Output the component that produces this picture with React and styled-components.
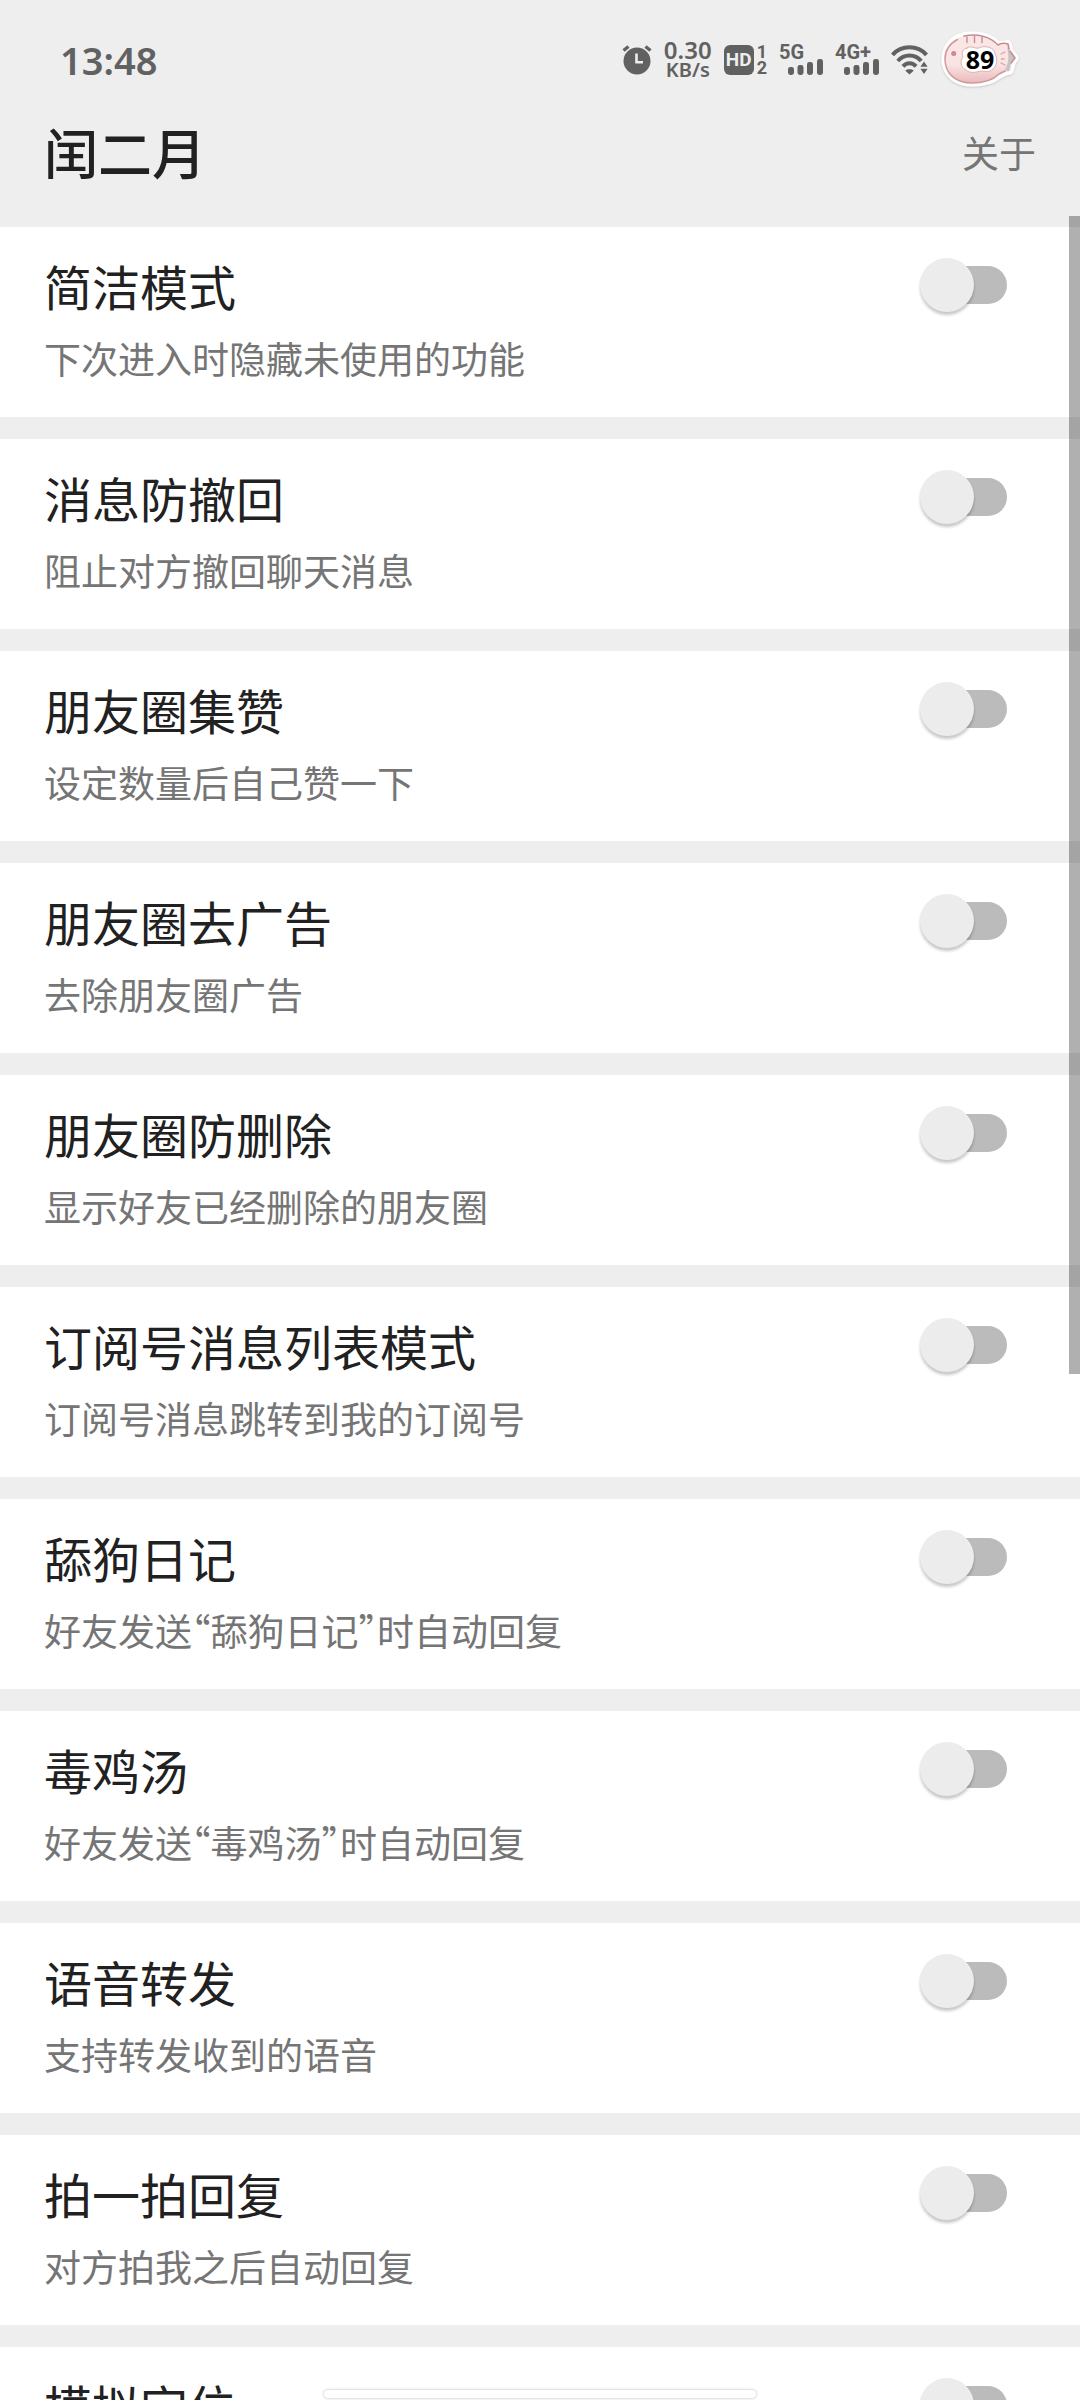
import { useState } from "react";
import styled, { createGlobalStyle } from "styled-components";

const FEATURES = [
  { id: "simple", title: "简洁模式", desc: "下次进入时隐藏未使用的功能" },
  { id: "revoke", title: "消息防撤回", desc: "阻止对方撤回聊天消息" },
  { id: "likes", title: "朋友圈集赞", desc: "设定数量后自己赞一下" },
  { id: "ads", title: "朋友圈去广告", desc: "去除朋友圈广告" },
  { id: "keep", title: "朋友圈防删除", desc: "显示好友已经删除的朋友圈" },
  { id: "subs", title: "订阅号消息列表模式", desc: "订阅号消息跳转到我的订阅号" },
  { id: "diary", title: "舔狗日记", desc: "好友发送“舔狗日记”时自动回复" },
  { id: "soup", title: "毒鸡汤", desc: "好友发送“毒鸡汤”时自动回复" },
  { id: "voice", title: "语音转发", desc: "支持转发收到的语音" },
  { id: "pat", title: "拍一拍回复", desc: "对方拍我之后自动回复" },
  { id: "location", title: "模拟定位" },
];

const AlarmIcon = () => (
  <svg width="30" height="30" viewBox="0 0 30 30" fill="#616161">
    <circle cx="15" cy="16" r="13.5" />
    <path d="M1.5 5.5 L6.5 1.5 M28.5 5.5 L23.5 1.5" stroke="#616161" strokeWidth="3.4" />
    <path d="M14.5 8.5 V17.3 H21" fill="none" stroke="#eeeeee" strokeWidth="2.6" />
  </svg>
);

const SignalBars = () => (
  <svg width="35" height="16" viewBox="0 0 35 16" fill="#616161">
    <rect x="0" y="8" width="6" height="8" rx="2.4" />
    <rect x="9.5" y="6" width="6" height="10" rx="2.4" />
    <rect x="19" y="3" width="6" height="13" rx="2.4" />
    <rect x="29" y="0" width="6" height="16" rx="2.4" />
  </svg>
);

const WifiIcon = () => (
  <svg width="37" height="30" viewBox="0 0 37 30" fill="none" stroke="#616161" strokeWidth="4">
    <path d="M1.5 9.8 C10.5 -0.2 26.5 -0.2 35.5 9.8" />
    <path d="M6.8 16 C13 8.8 24 8.8 30.2 16" />
    <path d="M12 21.4 C15.5 17.2 21.5 17.2 25 21.4" />
    <path d="M14.2 25.4 C16.5 23.8 20.5 23.8 22.8 25.4 L18.5 29.6 Z" fill="#616161" stroke="none" />
    <path d="M33 16.5 L36.6 21.8 H29.4 Z M29.4 23.8 H36.6 L33 29 Z" fill="#616161" stroke="none" />
  </svg>
);

const FishIcon = () => (
  <svg width="80" height="60" viewBox="0 0 80 60">
    <defs>
      <linearGradient id="fishBody" x1="0" y1="0" x2="0" y2="1">
        <stop offset="0" stopColor="#fbe6e6" />
        <stop offset="0.62" stopColor="#fae3e3" />
        <stop offset="1" stopColor="#e9b9b9" />
      </linearGradient>
      <filter id="fishShadow" x="-10%" y="-10%" width="120%" height="130%">
        <feDropShadow dx="0" dy="1" stdDeviation="1" floodColor="#000" floodOpacity="0.18" />
      </filter>
    </defs>
    <g strokeLinejoin="round" strokeLinecap="round">
      <path
        d="M31 5 C42 5 52 8 58 15 L68 13.5 L70 21 L75 28 L72 33 L70 41 L65 42 L59 45 C52 51 43 53 32 53 C16 53 5 44 5 29 C5 15 16 5 31 5 Z"
        fill="#fff"
        stroke="#fff"
        strokeWidth="7"
        filter="url(#fishShadow)"
      />
      <path
        d="M31 5 C42 5 52 8 58 15 L68 13.5 L70 21 L75 28 L72 33 L70 41 L65 42 L59 45 C52 51 43 53 32 53 C16 53 5 44 5 29 C5 15 16 5 31 5 Z"
        fill="url(#fishBody)"
      />
      <path d="M67 17 L70 22 L75 28 L71 33 L69 41 L65 40 C69 33 69 25 67 17 Z" fill="#c9c4c4" />
      <path
        d="M17.5 9.5 C9 14 5 20.5 5 29 C5 44 16 53 32 53 C43 53 52 51 59 44 L65 41"
        fill="none"
        stroke="#d09a9d"
        strokeWidth="1.5"
      />
      <path
        d="M24 6 C37 3.5 50 6 58 15 C61 13 65 13 68 14 L69 19 M70 21 L75 28 L71 33"
        fill="none"
        stroke="#c58e94"
        strokeWidth="1.6"
      />
      <path d="M27 7 V12.5 M34.5 6 V12.5 M42 7 V12.5" stroke="#c58e94" strokeWidth="1.4" />
      <path d="M61 24 L65 22 M61.5 29 H64 M61 33 L65 35" stroke="#d7a3a6" strokeWidth="1.3" />
      <path
        d="M27 18 C31 15 35 19 39 18 C44 15 55 17 55 24 C58 29 57 36 53 39 C49 43 44 41 40 41 C35 43 29 43 26 40 C20 37 20 31 23 27 C21 22 23 19 27 18 Z"
        fill="#fff"
        stroke="#dcb0b2"
        strokeWidth="1"
      />
      <circle cx="13.7" cy="23.5" r="2.5" fill="#c98a90" />
    </g>
  </svg>
);

const App = () => {
  const [enabled, setEnabled] = useState({});

  const toggle = (id) => {
    setEnabled((prev) => ({ ...prev, [id]: !prev[id] }));
  };

  return (
    <Screen lang="zh-CN">
      <GlobalStyle />
      <StatusBar>
        <Clock>13:48</Clock>
        <StatusIcons>
          <AlarmIcon />
          <Speed>
            <SpeedValue>0.30</SpeedValue>
            <SpeedUnit>KB/s</SpeedUnit>
          </Speed>
          <Volte>
            <HdBadge>HD</HdBadge>
            <SimNumbers>
              <span>1</span>
              <span>2</span>
            </SimNumbers>
          </Volte>
          <Network>
            <NetworkType>5G</NetworkType>
            <SignalBars />
          </Network>
          <Network>
            <NetworkType>4G+</NetworkType>
            <SignalBars />
          </Network>
          <WifiIcon />
          <Battery>
            <FishIcon />
            <BatteryLevel>89</BatteryLevel>
          </Battery>
        </StatusIcons>
      </StatusBar>
      <Header>
        <AppTitle>闰二月</AppTitle>
        <AboutLink href="#about">关于</AboutLink>
      </Header>
      <Content>
        <FeatureList>
          {FEATURES.map(({ id, title, desc }) => (
            <FeatureRow key={id}>
              <FeatureLabel htmlFor={id}>
                <FeatureTitle>{title}</FeatureTitle>
                {desc && <FeatureDesc>{desc}</FeatureDesc>}
              </FeatureLabel>
              <Switch
                id={id}
                type="checkbox"
                role="switch"
                checked={!!enabled[id]}
                onChange={() => toggle(id)}
              />
            </FeatureRow>
          ))}
        </FeatureList>
        <ScrollThumb />
      </Content>
      <HomeIndicator />
    </Screen>
  );
};

const GlobalStyle = createGlobalStyle`
  * {
    box-sizing: border-box;
  }
  body {
    margin: 0;
    background: #eeeeee;
    font-family: "Noto Sans CJK SC", sans-serif;
  }
`;

const Screen = styled.div`
  position: relative;
  display: flex;
  flex-direction: column;
  height: 100vh;
  overflow: hidden;
  background: #eeeeee;
  color: #212121;
`;

const StatusBar = styled.div`
  display: flex;
  justify-content: space-between;
  align-items: center;
  height: 120px;
  padding: 0 60px;
  color: #616161;
  font-family: "Noto Sans", sans-serif;
  font-weight: 600;
`;

const Clock = styled.time`
  font-size: 38px;
  line-height: 48px;
`;

const StatusIcons = styled.div`
  display: flex;
  align-items: center;
  gap: 12px;
`;

const Speed = styled.div`
  display: flex;
  flex-direction: column;
  align-items: center;
`;

const SpeedValue = styled.span`
  font-size: 24px;
  line-height: 20px;
`;

const SpeedUnit = styled.span`
  font-size: 20px;
  line-height: 20px;
`;

const Volte = styled.div`
  display: flex;
  gap: 3px;
  font-family: Roboto, sans-serif;
  font-weight: 700;
`;

const HdBadge = styled.span`
  width: 30px;
  height: 30px;
  border-radius: 6px;
  background: #616161;
  color: #eeeeee;
  font-size: 19px;
  line-height: 30px;
  text-align: center;
`;

const SimNumbers = styled.span`
  display: flex;
  flex-direction: column;
  justify-content: space-between;
  font-size: 18px;
  line-height: 14px;
`;

const Network = styled.div`
  display: flex;
  flex-direction: column;
  align-items: flex-end;
  width: 44px;
`;

const NetworkType = styled.span`
  align-self: flex-start;
  font-family: Roboto, sans-serif;
  font-size: 20px;
  font-weight: 700;
  line-height: 14px;
`;

const Battery = styled.div`
  position: relative;
  display: flex;
`;

const BatteryLevel = styled.span`
  position: absolute;
  inset: 0;
  color: #000000;
  font-size: 25px;
  font-weight: 700;
  line-height: 58px;
  text-align: center;
`;

const Header = styled.header`
  display: flex;
  justify-content: space-between;
  align-items: center;
  padding: 0 44px 32px;
`;

const AppTitle = styled.h1`
  margin: 0;
  font-size: 54px;
  font-weight: 500;
  line-height: 64px;
`;

const AboutLink = styled.a`
  color: #757575;
  font-size: 37px;
  line-height: 54px;
  text-decoration: none;
`;

const Content = styled.main`
  position: relative;
  flex: 1;
  min-height: 0;
`;

const FeatureList = styled.ul`
  display: flex;
  flex-direction: column;
  gap: 22px;
  height: 100%;
  margin: 0;
  padding: 11px 0 0;
  overflow-y: auto;
  scrollbar-width: none;
  list-style: none;
`;

const FeatureRow = styled.li`
  display: flex;
  flex-shrink: 0;
  justify-content: space-between;
  align-items: flex-start;
  padding: 31px 73px 32px 44px;
  background: #ffffff;
`;

const FeatureLabel = styled.label`
  display: flex;
  flex: 1;
  flex-direction: column;
  gap: 19px;
`;

const FeatureTitle = styled.span`
  font-size: 48px;
  line-height: 54px;
`;

const FeatureDesc = styled.span`
  color: #757575;
  font-size: 37px;
  line-height: 54px;
  /* half-width quotes */
  font-feature-settings: "halt";
`;

const Switch = styled.input`
  appearance: none;
  display: flex;
  align-items: center;
  width: 87px;
  height: 54px;
  margin: 0;
  cursor: pointer;

  &::before {
    content: "";
    width: 54px;
    height: 54px;
    border-radius: 50%;
    background: #ececec;
    box-shadow: 0 3px 3px rgba(0, 0, 0, 0.22);
    z-index: 1;
  }

  &::after {
    content: "";
    width: 60px;
    height: 38px;
    margin-left: -27px;
    border-radius: 19px;
    background: #bbbbbb;
  }

  &:checked {
    flex-direction: row-reverse;
  }

  &:checked::before {
    background: #009688;
  }

  &:checked::after {
    margin: 0 -27px 0 0;
    background: #80cbc4;
  }
`;

const ScrollThumb = styled.div`
  position: absolute;
  top: 0;
  right: 0;
  width: 11px;
  height: 53%;
  background: rgba(0, 0, 0, 0.31);
`;

const HomeIndicator = styled.div`
  position: absolute;
  bottom: 2px;
  left: 30%;
  width: 40%;
  height: 8px;
  border-radius: 4px;
  background: #ffffff;
  box-shadow: 0 0 3px rgba(0, 0, 0, 0.3);
`;

export default App;
